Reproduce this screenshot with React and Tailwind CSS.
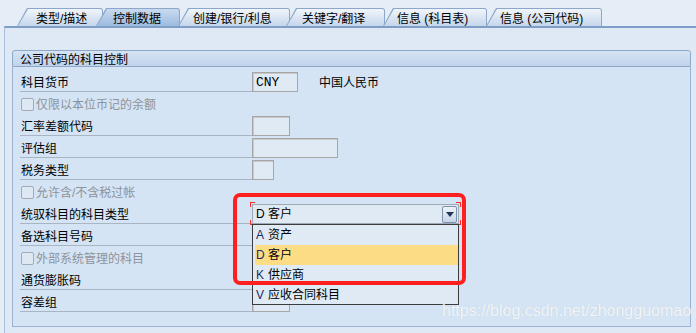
import { useState } from "react"

const tabs = [
  { label: "类型/描述", cls: "w-[86px]", pad: "pl-[19px]" },
  { label: "控制数据", cls: "w-[84px] -ml-[7px]", pad: "pl-[17px]", active: true },
  { label: "创建/银行/利息", cls: "w-[112px] -ml-[2px]", pad: "pl-[15px]" },
  { label: "关键字/翻译", cls: "w-[99px] -ml-[4px]", pad: "pl-[16px]" },
  { label: "信息 (科目表)", cls: "w-[104px] -ml-[2px]", pad: "pl-[14px]" },
  { label: "信息 (公司代码)", cls: "w-[116px] -ml-[1px]", pad: "pl-[14px]" },
]

const rows = [
  { kind: "input", label: "科目货币", w: "w-[46px]", value: "CNY", extra: "中国人民币" },
  { kind: "check", label: "仅限以本位币记的余额" },
  { kind: "input", label: "汇率差额代码", w: "w-[38px]" },
  { kind: "input", label: "评估组", w: "w-[86px]" },
  { kind: "input", label: "税务类型", w: "w-[22px]" },
  { kind: "check", label: "允许含/不含税过帐" },
  { kind: "combo", label: "统驭科目的科目类型" },
  { kind: "input", label: "备选科目号码", w: "w-[86px]" },
  { kind: "check", label: "外部系统管理的科目" },
  { kind: "input", label: "通货膨胀码", w: "w-[38px]" },
  { kind: "input", label: "容差组", w: "w-[38px]" },
]

const options = [
  { key: "A", text: "资产" },
  { key: "D", text: "客户", selected: true },
  { key: "K", text: "供应商" },
  { key: "V", text: "应收合同科目" },
]

function Tab({ label, cls, pad, active }) {
  return (
    <div
      className={`relative h-[18px] bg-[#8ca7ca] rounded-tr-[3px] [clip-path:polygon(10px_0,100%_0,100%_100%,0_100%)] ${cls} ${active ? "z-10" : ""}`}
    >
      <div
        className={`absolute left-[1px] right-[1px] top-[1px] bottom-0 rounded-tr-[2px] [clip-path:polygon(10px_0,100%_0,100%_100%,0_100%)] bg-linear-to-b ${
          active ? "from-[#c9daef] to-[#9dbbe0]" : "from-[#f0f5fa] to-[#c6d6eb]"
        }`}
      />
      <div className={`relative flex h-full items-center pt-[3px] ${pad} text-[12px] leading-none text-black`}>
        {label}
      </div>
    </div>
  )
}

function Checkbox() {
  return <div className="w-[13px] h-[13px] rounded-[2px] border border-[#a3aab3] bg-[#dde8f3] shrink-0" />
}

function Field({ w, value }) {
  return (
    <div
      className={`${w} h-[20px] border border-[#a6a6a6] bg-[#dfeaf5] shadow-[inset_1px_1px_0_#c9c9c9] flex items-center pl-[3px] font-['Liberation_Mono',monospace] text-[13px] leading-none text-black`}
    >
      {value}
    </div>
  )
}

function Combo() {
  const [sel] = useState("D")
  return (
    <div className="relative w-[207px] h-[20px]">
      <div className="w-full h-full border border-[#9ea9b6] bg-[#dfeaf5] flex items-center pl-[3px] pr-[1px]">
        <span className="flex-1 text-[12px] leading-none">
          {sel} 客户
        </span>
        <div className="w-[15px] h-[17px] rounded-[2px] border border-[#7d91ab] bg-linear-to-b from-[#eef3f9] to-[#c7d5e7] flex items-center justify-center">
          <svg width="8" height="5" viewBox="0 0 8 5">
            <path d="M0 0 H8 L4 5 Z" fill="#23345c" />
          </svg>
        </div>
      </div>

      {/* focus corners */}
      <div className="absolute -left-[2px] -top-[2px] w-[5px] h-[5px] border-l border-t border-[#ff2a2a]" />
      <div className="absolute -right-[2px] -top-[2px] w-[5px] h-[5px] border-r border-t border-[#ff2a2a]" />
      <div className="absolute -left-[2px] -bottom-[1px] w-[5px] h-[5px] border-l border-b border-[#ff2a2a]" />
      <div className="absolute -right-[2px] -bottom-[1px] w-[5px] h-[5px] border-r border-b border-[#ff2a2a]" />

      {/* open list */}
      <div className="absolute left-0 top-full z-20 w-[207px] h-[81px] border border-[#3c3c3c] bg-[#dfeaf5] pl-[2px] pr-0">
        {options.map((o) => (
          <div
            key={o.key}
            className={`h-[20px] flex items-center pl-[1px] text-[12px] leading-none ${o.selected ? "bg-[#fcdd86]" : ""}`}
          >
            <span className="w-[12px] text-[#1c2c66]">{o.key}</span>
            <span>{o.text}</span>
          </div>
        ))}
      </div>
    </div>
  )
}

export default function App() {
  return (
    <div className="relative w-[696px] h-[333px] overflow-hidden bg-[#e5edf6] font-['Liberation_Sans','Noto_Sans_CJK_SC',sans-serif] text-black">
      {/* tab strip */}
      <div className="h-[26px] flex items-end pl-[17px]">
        {tabs.map((t) => (
          <Tab key={t.label} {...t} />
        ))}
      </div>

      {/* tab page */}
      <div className="ml-[4px] h-[307px] border-t-2 border-l border-t-[#7f9ec7] border-l-[#a9bfdb] bg-[#dfe9f5] pt-[22px] pl-[7px]">
        <div className="relative w-[679px]">
          <div className="h-[17px] rounded-t-[3px] border border-[#8ea8ca] bg-linear-to-b from-[#d6e4f3] to-[#bfd3eb] flex items-center pt-[2px] pl-[7px] text-[12px] leading-none">
            公司代码的科目控制
          </div>
          <div className="h-[260px] border-x border-b border-[#9bb3d1] bg-[#d4e4f4] pt-[3px] pl-[7px]">
            {rows.map((r) => (
              <div key={r.label} className="h-[22px] flex items-end">
                {r.kind === "check" ? (
                  <div className="h-full flex items-center gap-[2px] pt-[3px] pl-[1px] text-[12px] leading-none text-[#8d939b]">
                    <Checkbox />
                    <span>{r.label}</span>
                  </div>
                ) : (
                  <>
                    <div className="w-[232px] h-full border-b border-[#a9b5c2] flex items-center pt-[4px] pl-[1px] text-[12px] leading-none">
                      {r.label}
                    </div>
                    {r.kind === "combo" ? <Combo /> : <Field w={r.w} value={r.value} />}
                    {r.extra && (
                      <div className="self-center mt-[4px] ml-[21px] text-[12px] leading-none">{r.extra}</div>
                    )}
                  </>
                )}
              </div>
            ))}
          </div>

          {/* red annotation frame */}
          <div className="absolute left-[221px] top-[143px] w-[233px] h-[92px] z-30 rounded-[7px] border-[4px] border-[#ff1f1f]" />

          {/* watermark */}
          <div className="absolute left-[430px] top-[253px] z-30 font-['Liberation_Sans',sans-serif] text-[16px] leading-none text-white/80 [text-shadow:0_0_1px_#b9c6d4]">
            https://blog.csdn.net/zhongguomao
          </div>
        </div>
      </div>
    </div>
  )
}
